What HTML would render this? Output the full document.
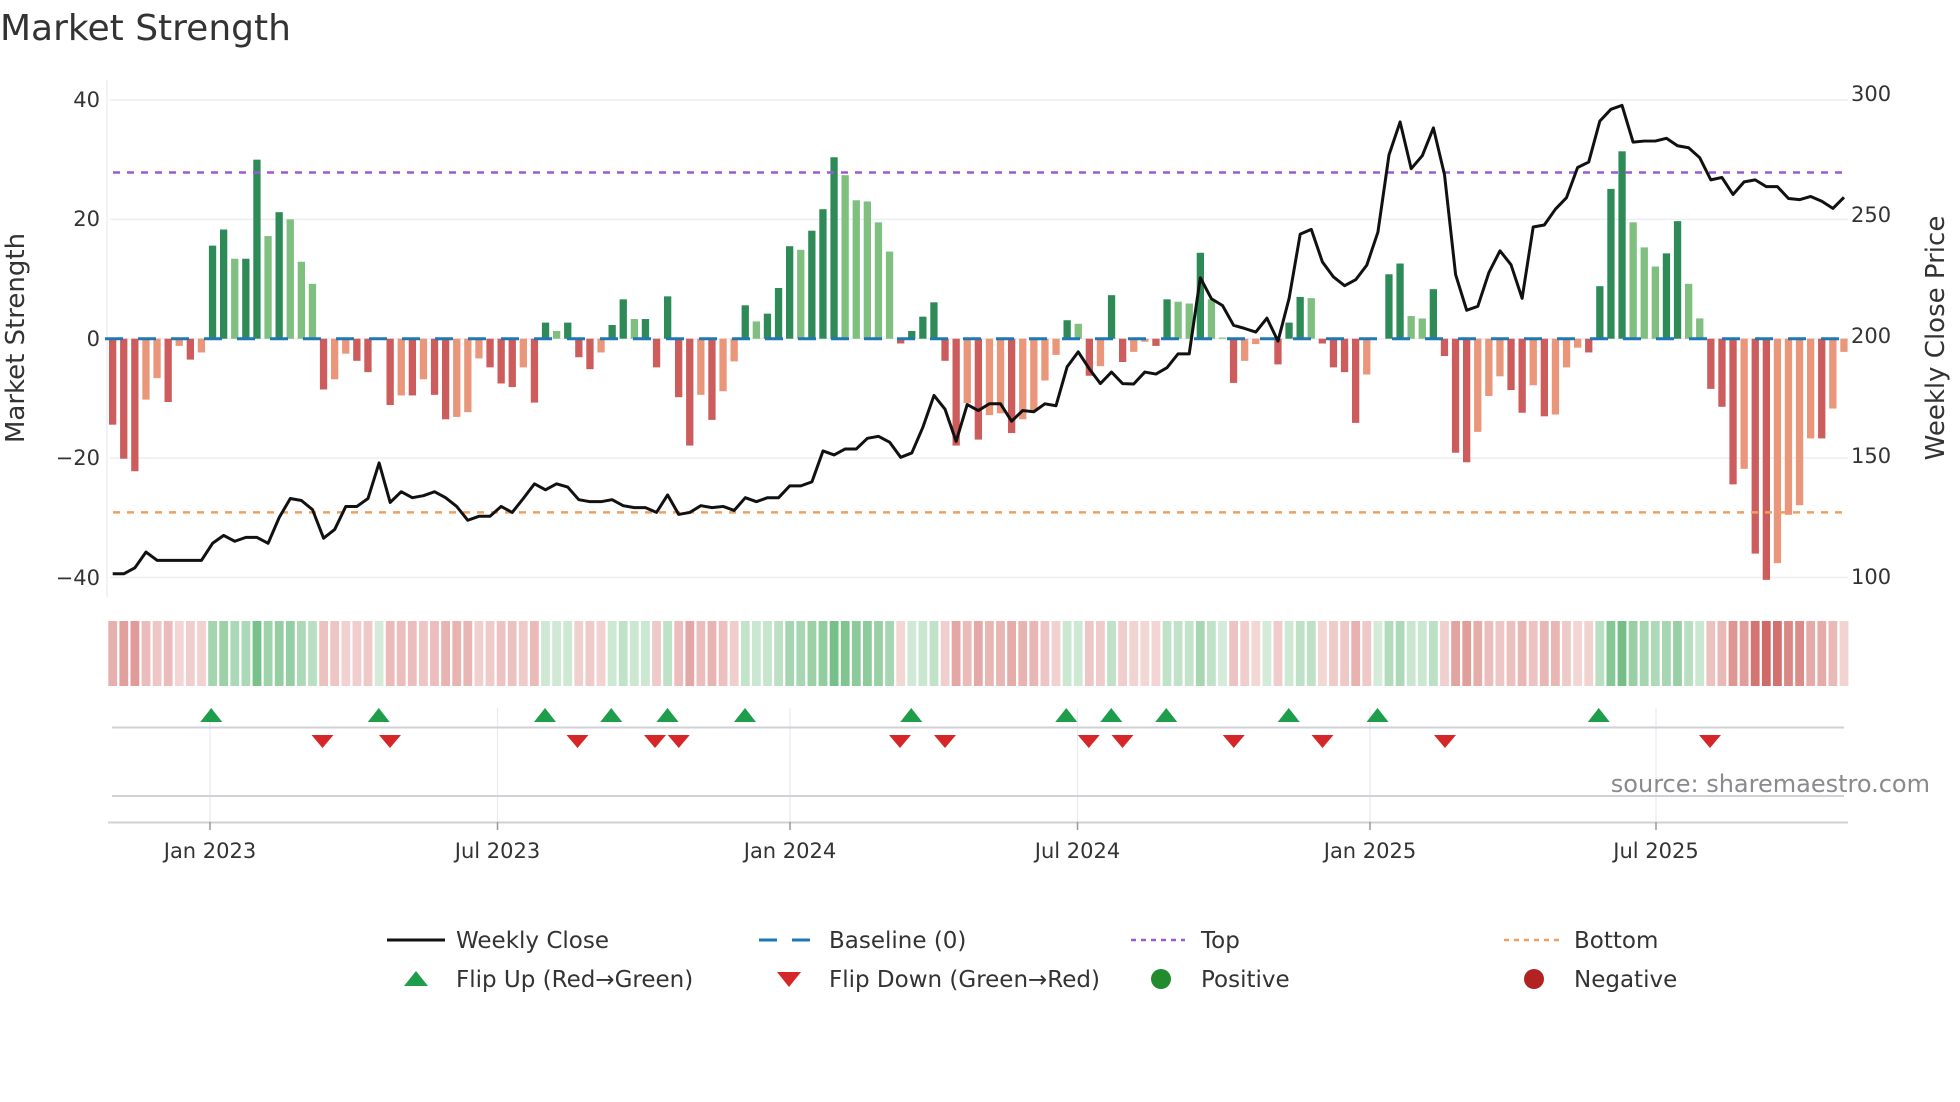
<!DOCTYPE html>
<html><head><meta charset="utf-8">
<style>
html,body{margin:0;padding:0;background:#fff;}
svg{display:block;}
text{font-family:"DejaVu Sans","Liberation Sans",sans-serif;fill:#333;}
</style></head>
<body>
<svg id="s" width="1960" height="1102" viewBox="0 0 1960 1102" xmlns="http://www.w3.org/2000/svg">
<rect width="1960" height="1102" fill="#fff"/>
<text x="0" y="40" font-size="36" fill="#333">Market Strength</text>
<g transform="matrix(1,0,0,0.9948,0,0)">
<g stroke="#eceef4" stroke-width="1.5">
<line x1="110" x2="1848" y1="100.5" y2="100.5"/>
<line x1="110" x2="1848" y1="220.5" y2="220.5"/>
<line x1="110" x2="1848" y1="340.5" y2="340.5"/>
<line x1="110" x2="1848" y1="460.5" y2="460.5"/>
<line x1="110" x2="1848" y1="580.5" y2="580.5"/>
<line x1="107" x2="107" y1="80" y2="600"/>
</g>
<g id="bars"></g>
<line x1="105" x2="1848" y1="340.5" y2="340.5" stroke="#1f77b4" stroke-width="3" stroke-dasharray="18 15"/>
<line x1="113" x2="1848" y1="173.4" y2="173.4" stroke="#9b59d6" stroke-width="2.5" stroke-dasharray="7 7"/>
<line x1="113" x2="1848" y1="515" y2="515" stroke="#eea060" stroke-width="2.5" stroke-dasharray="7 7"/>
<polyline id="price" fill="none" stroke="#111" stroke-width="3" stroke-linejoin="round"/>
</g>
<g font-size="21" text-anchor="end">
<text x="100" y="107">40</text>
<text x="100" y="226">20</text>
<text x="100" y="346">0</text>
<text x="100" y="465">−20</text>
<text x="100" y="585">−40</text>
</g>
<g font-size="21">
<text x="1851" y="101">300</text>
<text x="1851" y="222">250</text>
<text x="1851" y="343">200</text>
<text x="1851" y="463">150</text>
<text x="1851" y="584">100</text>
</g>
<text transform="translate(24,338) rotate(-90)" font-size="26" text-anchor="middle">Market Strength</text>
<text transform="translate(1944,338) rotate(-90)" font-size="26" text-anchor="middle">Weekly Close Price</text>
<g id="strip"></g>
<g stroke="#e8eaf0" stroke-width="1.2">
<line x1="210" x2="210" y1="708" y2="822"/><line x1="497.5" x2="497.5" y1="708" y2="822"/>
<line x1="790" x2="790" y1="708" y2="822"/><line x1="1077.5" x2="1077.5" y1="708" y2="822"/>
<line x1="1370" x2="1370" y1="708" y2="822"/><line x1="1656" x2="1656" y1="708" y2="822"/>
</g>
<g stroke="#cfd1d6" stroke-width="2">
<line x1="112" x2="1844" y1="727.5" y2="727.5"/>
<line x1="112" x2="1844" y1="796" y2="796"/>
<line x1="108" x2="1848" y1="822.5" y2="822.5"/>
</g>
<g stroke="#999" stroke-width="1.5">
<line x1="210" x2="210" y1="822" y2="830"/><line x1="497.5" x2="497.5" y1="822" y2="830"/>
<line x1="790" x2="790" y1="822" y2="830"/><line x1="1077.5" x2="1077.5" y1="822" y2="830"/>
<line x1="1370" x2="1370" y1="822" y2="830"/><line x1="1656" x2="1656" y1="822" y2="830"/>
</g>
<g id="marks"></g>
<text x="1930" y="792" font-size="24" text-anchor="end" style="fill:#8a8a8a">source: sharemaestro.com</text>
<g font-size="21" text-anchor="middle">
<text x="210" y="858">Jan 2023</text><text x="497.5" y="858">Jul 2023</text>
<text x="790" y="858">Jan 2024</text><text x="1077.5" y="858">Jul 2024</text>
<text x="1370" y="858">Jan 2025</text><text x="1656" y="858">Jul 2025</text>
</g>
<g font-size="23">
<line x1="387" x2="445" y1="940" y2="940" stroke="#111" stroke-width="3"/>
<text x="456" y="948">Weekly Close</text>
<line x1="759" x2="812" y1="940" y2="940" stroke="#1f77b4" stroke-width="3" stroke-dasharray="18 15"/>
<text x="829" y="948">Baseline (0)</text>
<line x1="1131" x2="1185" y1="940" y2="940" stroke="#9b59d6" stroke-width="2.5" stroke-dasharray="5 5"/>
<text x="1201" y="948">Top</text>
<line x1="1504" x2="1560" y1="940" y2="940" stroke="#eea060" stroke-width="2.5" stroke-dasharray="5 5"/>
<text x="1574" y="948">Bottom</text>
<polygon points="404,986 428,986 416,971" fill="#1e9e4a"/>
<text x="456" y="987">Flip Up (Red→Green)</text>
<polygon points="777,972 801,972 789,987" fill="#d62728"/>
<text x="829" y="987">Flip Down (Green→Red)</text>
<circle cx="1161" cy="979" r="10" fill="#228b2e"/>
<text x="1201" y="987">Positive</text>
<circle cx="1534" cy="979" r="10" fill="#b22222"/>
<text x="1574" y="987">Negative</text>
</g>
</svg>
<script>
var V=[-14.4,-20.1,-22.2,-10.2,-6.6,-10.6,-1.2,-3.5,-2.3,15.6,18.3,13.4,13.4,30,17.2,21.2,20,12.9,9.2,-8.5,-6.8,-2.5,-3.7,-5.6,0,-11.1,-9.5,-9.5,-6.8,-9.4,-13.5,-13.1,-12.3,-3.3,-4.8,-7.5,-8.1,-4.8,-10.7,2.7,1.3,
2.7,-3.1,-5.1,-2.3,2.3,6.6,3.3,3.3,-4.8,7.1,-9.8,-17.9,-9.4,-13.6,-8.8,-3.8,5.6,2.9,4.2,8.5,15.5,14.9,18.1,21.7,30.4,27.4,23.2,23,19.5,14.6,-0.8,1.3,3.7,6.1,-3.7,-17.9,-10.8,-16.9,-12.8,-12.5,
-15.8,-13.5,-12,-7,-2.7,3.1,2.5,-6.2,-4.6,7.3,-3.9,-2.2,-0.5,-1.2,6.6,6.2,5.9,14.4,6.6,0.2,-7.4,-3.7,-0.9,0,-4.3,2.7,7,6.8,-0.8,-4.8,-5.6,-14.1,-6,0,10.8,12.6,3.8,3.4,8.3,
-2.9,-19.1,-20.7,-15.6,-9.6,-6.3,-8.6,-12.4,-7.8,-13,-12.7,-4.8,-1.5,-2.3,8.8,25.1,31.4,19.5,15.3,12.1,14.3,19.7,9.2,3.4,-8.4,-11.4,-24.4,-21.8,-36,-40.4,-37.6,-29.5,-27.9,-16.7,-16.7,-11.7,-2.2];
var P=[1247,1247,1232,1192,1213,1213,1213,1213,1213,1170,1150,1165,1155,1155,1170,1105,1057,1062,1085,1157,1135,1077,1077,1057,967,1067,1040,1055,1050,1040,1055,1077,1112,1102,1102,1077,1092,1057,1020,1035,1020,
1028,1060,1065,1065,1060,1075,1080,1080,1092,1048,1097,1092,1075,1080,1077,1087,1055,1065,1055,1055,1025,1025,1015,937,947,932,932,905,900,915,953,942,877,797,832,913,820,835,818,818,
862,835,838,818,823,725,687,730,767,738,767,768,738,743,727,692,692,500,553,570,620,628,637,602,660,552,390,378,460,498,520,505,468,385,190,107,225,192,122,
240,492,582,572,487,432,467,552,372,367,327,298,222,208,105,75,65,158,155,155,148,167,172,197,253,247,290,258,253,270,270,300,303,295,307,325,297];
var ns="http://www.w3.org/2000/svg";
function el(t,a,p){var e=document.createElementNS(ns,t);for(var k in a)e.setAttribute(k,a[k]);p.appendChild(e);return e;}
var bars=document.getElementById('bars'),strip=document.getElementById('strip');
var pts=[];
for(var i=0;i<V.length;i++){
 var v=V[i],cx=112.7+i*11.098;
 var prev=i>0?V[i-1]:0,col;
 if(v>=0){col=(i===0||prev<0||v>=prev)?'#2e8b57':'#7fbf7f';}
 else{col=(prev>=0||v<=prev)?'#cd5c5c':'#e9967a';}
 var h=Math.abs(v)*6;
 if(h>0.3){el('rect',{x:(cx-3.65).toFixed(1),y:(v>=0?340.5-h:340.5).toFixed(1),width:7.3,height:h.toFixed(1),fill:col},bars);}
 var a=0.22+0.63*Math.min(Math.abs(v)/40,1);
 var sc=v>=0?'rgba(60,165,85,'+a.toFixed(2)+')':'rgba(200,80,75,'+a.toFixed(2)+')';
 el('rect',{x:(cx-4.4).toFixed(1),y:621,width:8.8,height:65,fill:sc},strip);
 pts.push(cx.toFixed(1)+','+(80+P[i]/2.51).toFixed(1));
}
document.getElementById('price').setAttribute('points',pts.join(' '));
var marks=document.getElementById('marks');
var up=[169,303,436,489,534,596,729,853,889,933,1031,1102,1279],dn=[258,312,462,524,543,720,756,871,898,987,1058,1156,1368];
up.forEach(function(x){x*=1.25;el('polygon',{points:(x-11)+',722 '+(x+11)+',722 '+x+',708',fill:'#1e9e4a'},marks);});
dn.forEach(function(x){x*=1.25;el('polygon',{points:(x-11)+',735 '+(x+11)+',735 '+x+',748',fill:'#d62728'},marks);});
</script>
</body></html>
